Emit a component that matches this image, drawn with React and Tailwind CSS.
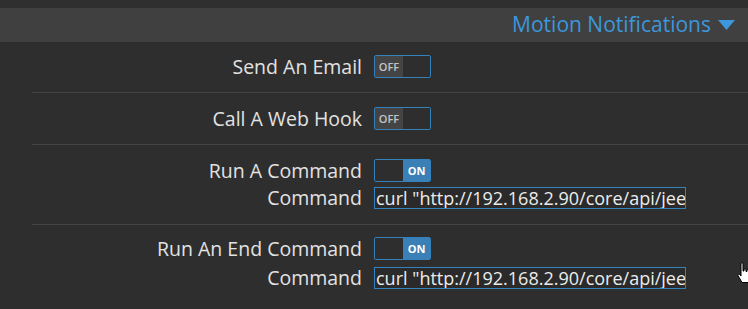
import React from "react";

const font = { fontFamily: '"Open Sans", "DejaVu Sans", sans-serif' };

function Toggle({ on }) {
  return (
    <div className="flex h-[23px] w-[57px] overflow-hidden rounded-[2px] border border-[#3381bd] text-[11px] leading-none">
      {on ? (
        <>
          <div className="w-[28px] bg-[#2e2e2e]"></div>
          <div className="flex flex-1 items-center justify-center bg-[#3a7fb6] font-bold text-white">ON</div>
        </>
      ) : (
        <>
          <div className="flex w-[28px] items-center justify-center bg-[#444444] font-semibold text-[#c4c4c4]">OFF</div>
          <div className="flex-1 bg-[#2e2e2e]"></div>
        </>
      )}
    </div>
  );
}

function Row({ label, children }) {
  return (
    <div className="grid grid-cols-[362px_1fr] items-center gap-x-[12px]">
      <div className="whitespace-nowrap text-right text-[19.5px] leading-[23px] text-[#e2e2e2]">{label}</div>
      <div>{children}</div>
    </div>
  );
}

function CommandInput() {
  return (
    <div className="h-[22px] w-[312px] overflow-hidden whitespace-nowrap border border-[#3381bd] bg-[#2a2a2a] pl-[1px] text-[18px] leading-[20px] text-[#ececec]">
      curl "http://192.168.2.90/core/api/jeeApi.php"
    </div>
  );
}

function Section({ className, children }) {
  return (
    <div className={"ml-[32px] " + className}>
      <div className="-ml-[32px]">{children}</div>
    </div>
  );
}

export default function App() {
  return (
    <div className="relative h-[309px] w-[748px] overflow-hidden bg-[#2e2e2e]" style={font}>
      <div className="h-[8px] bg-[#2f2f2f]"></div>
      <div className="flex h-[34px] items-center justify-end bg-[#404040] pr-[13px] text-[21px] text-[#3c97dc]">
        <span>Motion Notifications</span>
        <svg className="ml-[7px] mt-[1px]" width="17" height="11" viewBox="0 0 17 11">
          <path d="M0 0 H17 L8.5 10 Z" fill="#3c97dc" />
        </svg>
      </div>

      <Section className="border-b border-[#444444] pb-[14px] pt-[13px]">
        <Row label="Send An Email"><Toggle on={false} /></Row>
      </Section>

      <Section className="border-b border-[#444444] pb-[14px] pt-[14px]">
        <Row label="Call A Web Hook"><Toggle on={false} /></Row>
      </Section>

      <Section className="border-b border-[#444444] pb-[15px] pt-[14px]">
        <div className="flex flex-col gap-[4px]">
          <Row label="Run A Command"><Toggle on={true} /></Row>
          <Row label="Command"><CommandInput /></Row>
        </div>
      </Section>

      <Section className="pt-[12px]">
        <div className="flex flex-col gap-[6px]">
          <Row label="Run An End Command"><Toggle on={true} /></Row>
          <Row label="Command"><CommandInput /></Row>
        </div>
      </Section>

      {/* mouse cursor */}
      <svg className="absolute left-[737px] top-[262px]" width="18" height="22" viewBox="0 0 18 22">
        <path
          d="M4 1.5 C4 0.7 6 0.7 6 1.5 V9 H7 V7.5 C7 6.7 9 6.7 9 7.5 V9.5 H10 V8.3 C10 7.5 12 7.5 12 8.3 V10 H13 V9.3 C13 8.5 15 8.5 15 9.3 V15 L13 20.5 H5 L1 13.5 C0.6 12.6 1.8 11.8 2.6 12.6 L4 14 Z"
          fill="#ffffff"
          stroke="#000000"
          strokeWidth="1"
        />
      </svg>
    </div>
  );
}
